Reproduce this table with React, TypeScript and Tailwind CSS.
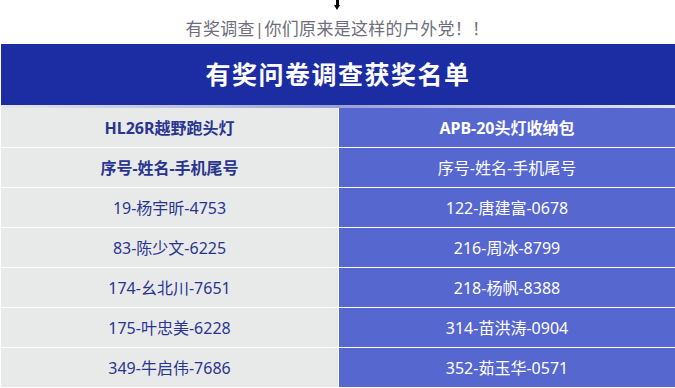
const rows: [string, string][] = [
  ["19-杨宇昕-4753", "122-唐建富-0678"],
  ["83-陈少文-6225", "216-周冰-8799"],
  ["174-幺北川-7651", "218-杨帆-8388"],
  ["175-叶忠美-6228", "314-苗洪涛-0904"],
  ["349-牛启伟-7686", "352-茹玉华-0571"],
];

const font = { fontFamily: '"Noto Sans", "Noto Sans CJK SC", sans-serif' };

function Row({ left, right, bold, rightBold }: { left: string; right: string; bold?: boolean; rightBold?: boolean }) {
  return (
    <div className="flex h-[40px] border-b border-white">
      <div
        className={`flex w-[337px] items-center justify-center bg-[#e8eaea] text-[16px] text-[#2a3590] ${bold ? "font-bold" : ""}`}
      >
        {left}
      </div>
      <div className="w-px bg-white" />
      <div
        className={`flex flex-1 items-center justify-center bg-[#5767d0] text-[16px] text-white ${rightBold ? "font-bold" : ""}`}
      >
        {right}
      </div>
    </div>
  );
}

export default function App() {
  return (
    <div className="h-[388px] w-[675px] overflow-hidden bg-white" style={font}>
      <div className="relative h-[44px]">
        <div className="absolute left-[336px] top-0 h-[6px] w-[3px] bg-black" />
        <div className="absolute left-[334px] top-[5px] h-0 w-0 border-x-[3.5px] border-t-[5px] border-x-transparent border-t-black" />
        <div className="pt-[17px] text-center text-[17px] leading-[24px] tracking-[0.3px] text-[#6e6e7c]">
          有奖调查|你们原来是这样的户外党！！
        </div>
      </div>
      <div className="ml-[1px]">
        <div className="flex h-[61px] items-center justify-center bg-[#1c2ca2] text-[25px] font-bold tracking-[1.5px] text-white">
          有奖问卷调查获奖名单
        </div>
        <div className="h-[3px] bg-gradient-to-r from-[#e4e6ee] via-[#9aa0d4] to-[#e6e8ee]" />
        <Row left="HL26R越野跑头灯" right="APB-20头灯收纳包" bold rightBold />
        <Row left="序号-姓名-手机尾号" right="序号-姓名-手机尾号" bold />
        {rows.map(([l, r]) => (
          <Row key={l} left={l} right={r} />
        ))}
      </div>
    </div>
  );
}
